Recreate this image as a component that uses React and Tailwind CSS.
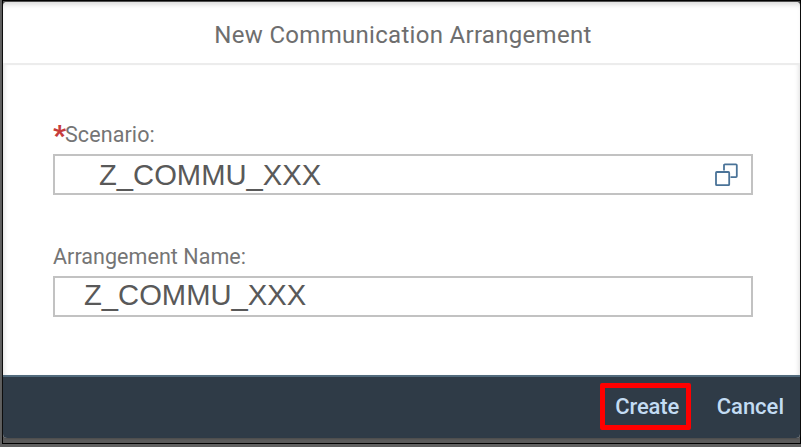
const fieldText = "font-['Liberation_Sans',Arial,sans-serif] text-[29.2px] leading-none text-[#595959]";

function ValueHelpIcon() {
  return (
    <svg width="24" height="24" viewBox="0 0 24 24" fill="none" stroke="#4a7398" strokeWidth="1.8">
      <path d="M9 7.5V2.2q0-.9.9-.9h11q.9 0 .9.9v11q0 .9-.9.9h-5.4" />
      <rect x="1" y="9" width="13.2" height="13.2" rx=".8" />
    </svg>
  );
}

function Field({ label, required, children }) {
  return (
    <div>
      <div className="flex h-[21px] items-center text-[21.5px] leading-none text-[#757575]">
        {required && <span className="w-[12px] text-[28px] font-black leading-none pt-[2px] text-[#c63c3c]">*</span>}
        {label}
      </div>
      <div className="mt-[9px] flex h-[41px] w-[700px] items-center justify-between border-2 border-[#c2c2c2] bg-white">
        {children}
      </div>
    </div>
  );
}

export default function App() {
  return (
    <div className="h-[447px] w-[801px] overflow-hidden bg-[#606060] pl-[2px] font-[Roboto,sans-serif]">
      <div className="h-[444px] border border-black bg-[#595959] pt-px">
        <div className="flex h-[436px] flex-col overflow-hidden rounded-[4px] bg-white shadow-[0_0_2px_#333]">
          <header className="flex h-[63px] shrink-0 items-center justify-center border-b-2 border-[#ececec] pt-[4px] text-[24px] leading-none text-[#6e6e6e] shadow-[inset_0_5px_5px_-2px_#dddddd]">
            <h1 className="pl-[3px] tracking-[0.3px]">New Communication Arrangement</h1>
          </header>
          <main className="flex h-[310px] shrink-0 flex-col gap-[51px] px-[50px] pt-[59px] shadow-[inset_-5px_0_5px_-4px_#dddddd,inset_5px_0_5px_-4px_#dddddd]">
            <Field label={<span className="tracking-[0.1px]">Scenario:</span>} required>
              <span className={`${fieldText} pt-[2px] pl-[44px]`}>Z_COMMU_XXX</span>
              <span className="pr-[12px]"><ValueHelpIcon /></span>
            </Field>
            <Field label={<span className="tracking-[0.05px]">Arrangement Name:</span>}>
              <span className={`${fieldText} pb-[2px] pl-[29px]`}>Z_COMMU_XXX</span>
            </Field>
          </main>
          <footer className="flex grow items-start justify-end border-t-2 border-[#526b7d] bg-[#2f3b47] pr-[16px] pt-[6px] text-[22px] font-medium leading-none text-[#c3dcf3]">
            <button className="flex h-[47px] w-[91px] items-center justify-center rounded-[2px] border-[5px] border-[#ff0000] pl-[4px] tracking-[-0.15px]">Create</button>
            <button className="ml-[26px] h-[47px]">Cancel</button>
          </footer>
        </div>
      </div>
    </div>
  );
}
